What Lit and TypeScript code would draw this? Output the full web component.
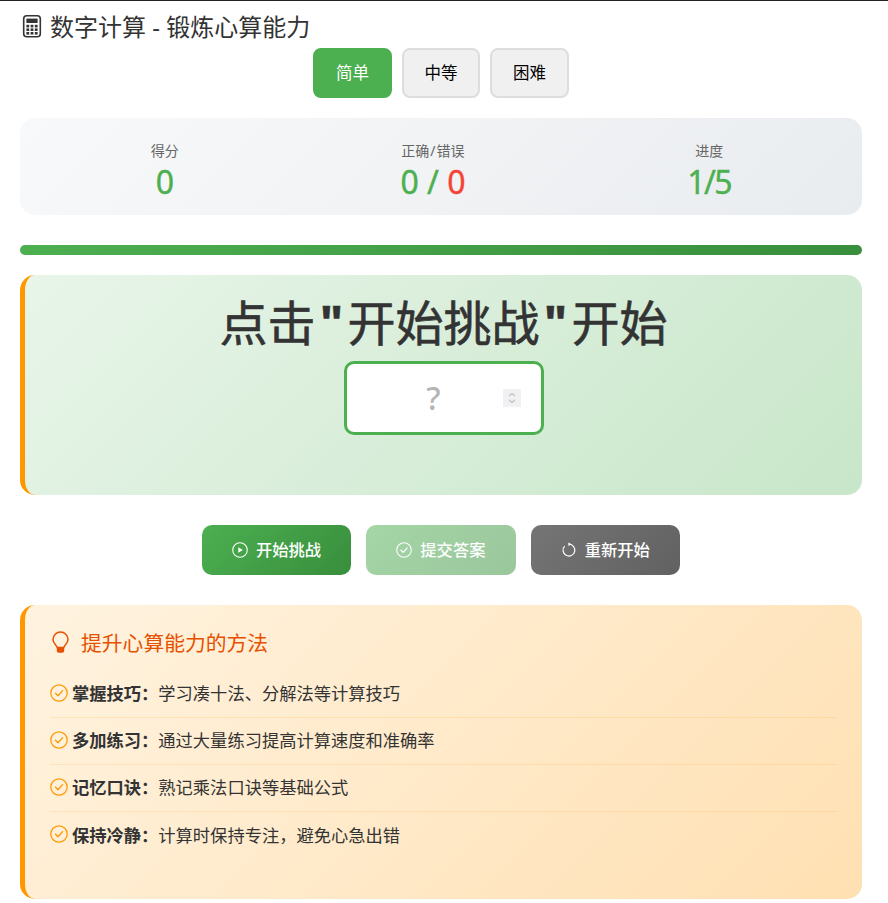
import { LitElement, html, css, svg } from "lit";
import { customElement } from "lit/decorators.js";

const checkIcon = () => html`<svg viewBox="0 0 16 16" fill="none" stroke="currentColor">
  <circle cx="8" cy="8" r="7.3" stroke-width="1.1"></circle>
  <path d="M4.9 8.2 7.1 10.4 11.2 5.9" stroke-width="1.2" stroke-linecap="round" stroke-linejoin="round"></path>
</svg>`;

const tips = [
  ["掌握技巧：", "学习凑十法、分解法等计算技巧"],
  ["多加练习：", "通过大量练习提高计算速度和准确率"],
  ["记忆口诀：", "熟记乘法口诀等基础公式"],
  ["保持冷静：", "计算时保持专注，避免心急出错"],
];

@customElement("app-root")
export class AppRoot extends LitElement {
  static styles = css`
    :host {
      display: block;
      box-sizing: border-box;
      border-top: 1px solid #222;
      padding: 0 26px 4px 20px;
      background: #fff;
      color: #333;
      font-family: "Noto Sans", "Noto Sans CJK SC", sans-serif;
    }
    * { box-sizing: border-box; }
    h1 {
      margin: 0;
      height: 47px;
      padding-top: 9px;
      display: flex;
      align-items: flex-start;
      gap: 6px;
      font-size: 24px;
      line-height: 33px;
      font-weight: 400;
      color: #333;
    }
    h1 svg { width: 24px; height: 24px; margin-top: 4px; flex: none; }
    .levels { display: flex; justify-content: center; gap: 10px; margin-bottom: 20px; }
    .level {
      height: 50px;
      width: 78px;
      border: 2px solid #ddd;
      border-radius: 8px;
      background: #f0f0f0;
      color: #000;
      font: inherit;
      font-size: 16.5px;
      padding: 0 0 2px;
    }
    .level.on { background: #4caf50; border-color: #4caf50; color: #fff; width: 79px; }
    .level.wide { width: 79px; }
    .stats {
      height: 97px;
      border-radius: 15px;
      background: linear-gradient(135deg, #f8f9fa, #e9ecef);
      display: flex;
      justify-content: space-around;
      align-items: center;
      margin-bottom: 30px;
      padding: 12px 20px 0;
    }
    .stat { text-align: center; }
    .label { font-size: 14px; line-height: 19px; color: #666; }
    .slash { padding: 0 1px; }
    .value { font-size: 32px; line-height: 44px; font-weight: 400; color: #4caf50; -webkit-text-stroke: 0.4px currentColor; }
    .value.tight { letter-spacing: -1.5px; }
    .value .bad { color: #f44336; }
    .track {
      height: 10px;
      border-radius: 5px;
      background: linear-gradient(90deg, #4caf50, #388e3c);
      margin-bottom: 20px;
    }
    .game {
      height: 220px;
      border-radius: 15px;
      border-left: 5px solid #ff9800;
      background: linear-gradient(135deg, #e8f5e9, #c8e6c9);
      display: flex;
      flex-direction: column;
      align-items: center;
      padding-top: 15px;
      margin-bottom: 30px;
    }
    .question {
      font-size: 48px;
      line-height: 66px;
      font-weight: 400;
      -webkit-text-stroke: 0.6px currentColor;
      color: #333;
      margin-bottom: 5px;
    }
    .q { padding: 0 4.5px; font-weight: 700; }
    .field { position: relative; width: 200px; height: 74px; }
    input {
      display: block;
      width: 100%;
      height: 100%;
      border: 3px solid #4caf50;
      border-radius: 10px;
      background: #fff;
      text-align: center;
      font: inherit;
      font-size: 32px;
      font-weight: 500;
      padding: 10px 40px 12px 20px;
      outline: none;
    }
    input::placeholder { color: #b5b5b5; opacity: 1; }
    input::-webkit-inner-spin-button { display: none; }
    .spin {
      position: absolute;
      left: 159px;
      top: 28px;
      width: 18px;
      height: 18px;
      background: #f1f1f3;
    }
    .spin svg { display: block; width: 18px; height: 18px; }
    .actions { display: flex; justify-content: center; gap: 15px; margin-bottom: 30px; }
    .action {
      height: 50px;
      width: 149.33px;
      padding: 0 0 2px 30px;
      border: 0;
      border-radius: 10px;
      color: #fff;
      font: inherit;
      font-size: 16.3px;
      font-weight: 500;
      display: flex;
      align-items: center;
      gap: 8px;
    }
    .action svg { width: 16px; height: 16px; flex: none; margin-top: 2px; }
    .green { background: linear-gradient(135deg, #4caf50, #388e3c); }
    .dim { opacity: 0.5; }
    .grey { background: linear-gradient(135deg, #757575, #616161); }
    .tips {
      height: 294px;
      border-radius: 15px;
      border-left: 5px solid #ff9800;
      background: linear-gradient(135deg, #fff3e0, #ffe0b2);
      padding: 25px;
    }
    h2 {
      margin: 0 0 15px;
      display: flex;
      align-items: center;
      gap: 10px;
      font-size: 20.8px;
      line-height: 26px;
      font-weight: 400;
      color: #e65100;
    }
    h2 svg { width: 21px; height: 24px; flex: none; }
    .tip {
      height: 47px;
      padding-bottom: 3px;
      display: flex;
      align-items: center;
      font-size: 17.28px;
      color: #333;
      border-bottom: 1px solid rgba(255, 152, 0, 0.15);
    }
    .tip:last-child { border-bottom: 0; }
    .tip svg { width: 18px; height: 18px; color: #ff9800; margin-right: 4px; flex: none; }
    .tip b { font-weight: 700; }
  `;

  render() {
    return html`
      <h1>
        <svg viewBox="0 0 24 24" fill="none">
          <rect x="3.7" y="1.8" width="16.6" height="21" rx="3" stroke="#333" stroke-width="1.6"></rect>
          <rect x="6.4" y="4.6" width="11.2" height="4.4" fill="#333"></rect>
          <g fill="#333">
            ${[10.8, 14.4, 18].flatMap((y) =>
              [6.4, 10.6, 14.8].map((x) => svg`<rect x=${x} y=${y} width="2.8" height="2.6"></rect>`)
            )}
          </g>
        </svg>
        数字计算 - 锻炼心算能力
      </h1>

      <div class="levels">
        <button class="level on">简单</button>
        <button class="level">中等</button>
        <button class="level wide">困难</button>
      </div>

      <div class="stats">
        <div class="stat"><div class="label">得分</div><div class="value">0</div></div>
        <div class="stat"><div class="label">正确<span class="slash">/</span>错误</div><div class="value">0 / <span class="bad">0</span></div></div>
        <div class="stat"><div class="label">进度</div><div class="value tight">1/5</div></div>
      </div>

      <div class="track"></div>

      <div class="game">
        <div class="question">点击<span class="q">"</span>开始挑战<span class="q">"</span>开始</div>
        <div class="field">
          <input type="number" placeholder="?" />
          <div class="spin">
            <svg viewBox="0 0 18 18" fill="none" stroke="#c4c4c4" stroke-width="1.3" stroke-linecap="round" stroke-linejoin="round">
              <path d="M6.4 6.8 9 4.4 11.6 6.8"></path>
              <path d="M6.4 11.2 9 13.6 11.6 11.2"></path>
            </svg>
          </div>
        </div>
      </div>

      <div class="actions">
        <button class="action green">
          <svg viewBox="0 0 16 16" fill="none" stroke="currentColor">
            <circle cx="8" cy="8" r="7.3" stroke-width="1.1"></circle>
            <path d="M6.3 5.2 10.8 8 6.3 10.8Z" fill="currentColor" stroke="none"></path>
          </svg>
          开始挑战
        </button>
        <button class="action green dim">${checkIcon()}提交答案</button>
        <button class="action grey">
          <svg viewBox="0 0 16 16" fill="none" stroke="currentColor">
            <path d="M8 2.2A5.9 5.9 0 1 1 3.6 4.1" stroke-width="1.2"></path>
            <path d="M10.4 2.3 7.4 0.5V4.1Z" fill="currentColor" stroke="none"></path>
          </svg>
          重新开始
        </button>
      </div>

      <div class="tips">
        <h2>
          <svg viewBox="0 0 21 24" fill="none">
            <path d="M7.2 16.6C7 14.6 3 12.6 3 8.6A7.5 7.5 0 0 1 18 8.6C18 12.6 14 14.6 13.8 16.6Z" stroke="#e65100" stroke-width="1.5" stroke-linejoin="round"></path>
            <path d="M6.8 16.6H14.2V19.8A2 2 0 0 1 12.2 21.8H8.8A2 2 0 0 1 6.8 19.8Z" fill="#e65100"></path>
          </svg>
          提升心算能力的方法
        </h2>
        ${tips.map(([k, v]) => html`<div class="tip">${checkIcon()}<b>${k}</b>${v}</div>`)}
      </div>
    `;
  }
}
